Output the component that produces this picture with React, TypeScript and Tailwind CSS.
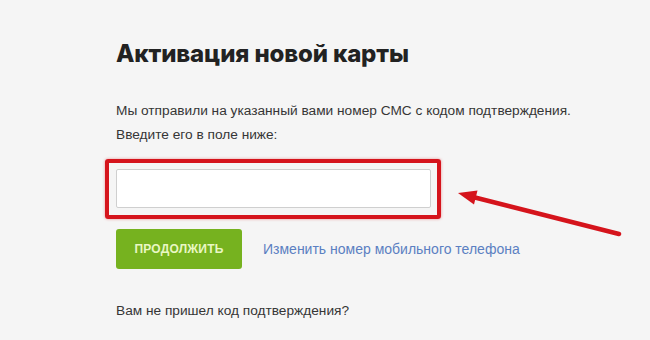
import React from 'react';

export default function App() {
  return (
    <div className="relative w-[650px] h-[340px] overflow-hidden bg-[#f5f5f5] font-['Liberation_Sans',Arial,sans-serif]">
      <div className="pl-[116px] pt-[39px]">
        <h1 className="font-['Inter',sans-serif] text-[24px] leading-[30px] font-extrabold text-[#222222] tracking-[-0.15px]">
          Активация новой карты
        </h1>

        <p className="mt-[30px] text-[13.7px] leading-[24px] text-[#363636]">
          Мы отправили на указанный вами номер СМС с кодом подтверждения.
          <br />
          Введите его в поле ниже:
        </p>

        <div className="relative mt-[22px] w-[315px]">
          <input
            type="text"
            className="block w-full h-[39px] bg-white border border-[#cfcfcf] rounded-[2px] px-3 text-[14px] outline-none"
          />
          <div className="absolute -left-[11px] -right-[10px] -top-[10px] -bottom-[11px] border-[4px] border-[#d5141c] rounded-[3px] shadow-[0_0_3px_rgba(220,20,30,0.45)] pointer-events-none" />
        </div>

        <div className="mt-[21px] flex items-center gap-[21px]">
          <button className="w-[126px] h-[40px] rounded-[3px] bg-[#76b21f] text-[#e9f7c4] text-[12px] font-bold uppercase tracking-[0.2px]">
            Продолжить
          </button>
          <a href="#" className="text-[14px] text-[#5b80c2]">
            Изменить номер мобильного телефона
          </a>
        </div>

        <p className="mt-[30px] text-[13.7px] leading-[24px] text-[#363636]">
          Вам не пришел код подтверждения?
        </p>
      </div>

      <svg
        className="absolute left-0 top-0 pointer-events-none"
        width="650"
        height="340"
        viewBox="0 0 650 340"
      >
        <line x1="473" y1="197" x2="619" y2="234" stroke="#d5141c" strokeWidth="4.5" strokeLinecap="round" />
        <polygon points="458,193 474,204.5 477.5,190.5" fill="#d5141c" />
      </svg>
    </div>
  );
}
